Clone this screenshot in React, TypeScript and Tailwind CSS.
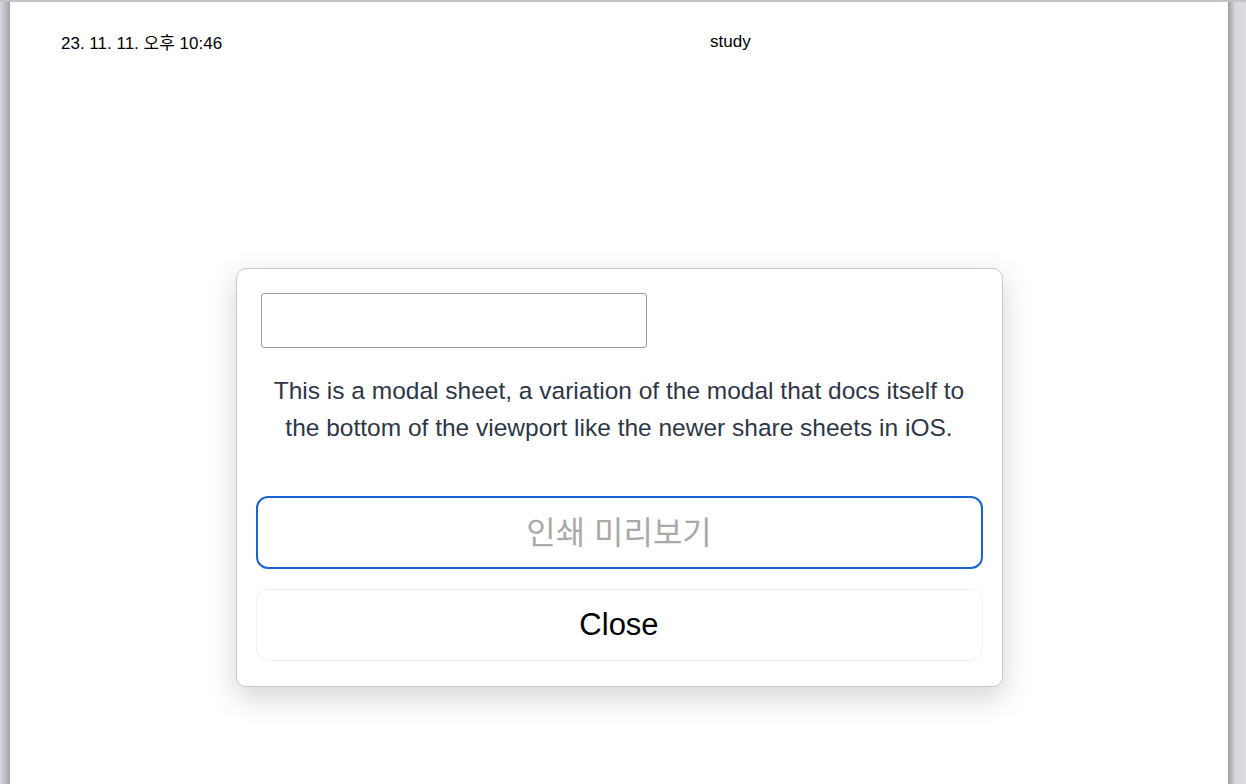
export default function App() {
  return (
    <div className="flex h-[784px] w-[1246px] flex-col overflow-hidden bg-[#dcdde1] font-['Liberation_Sans','Noto_Sans_CJK_KR',sans-serif]">
      {/* top edge of the print preview */}
      <div className="h-[2px] w-full bg-[#c2c3c7]" />
      <div className="flex flex-1">
        <div className="w-[10px] bg-gradient-to-r from-[#d9dade] to-[#a4a5ab]" />

        {/* printed page */}
        <div className="flex w-[1218px] flex-col bg-white">
          <div className="flex items-start pt-[30px] pl-[51px] text-[17px] leading-[20px] text-black">
            <span className="mt-[2px]">23. 11. 11. 오후 10:46</span>
            <span className="ml-[488px]">study</span>
          </div>

          <div className="mx-auto mt-[214px] flex w-[767px] flex-col rounded-[10px] border border-[#c9c9c9] bg-white px-[19px] pt-[24px] pb-[25px] shadow-[0_10px_30px_rgba(0,0,0,0.18)]">
            <input
              type="text"
              className="ml-[5px] h-[55px] w-[386px] rounded-[3px] border border-[#9c9c9c] bg-white px-2 text-[16px] outline-none"
            />

            <p className="mt-[24px] text-center text-[24.5px] leading-[37px] text-[#2d3748]">
              This is a modal sheet, a variation of the modal that docs itself to
              <br />
              the bottom of the viewport like the newer share sheets in iOS.
            </p>

            <button className="mt-[50px] flex h-[73px] w-full items-center justify-center rounded-[12px] border-2 border-[#1a62d6] bg-white text-[32px] text-[#a9a9a9]">
              인쇄 미리보기
            </button>

            <button className="mt-[20px] flex h-[72px] w-full items-center justify-center rounded-[12px] border border-[#f0f0f0] bg-white text-[31px] text-black">
              Close
            </button>
          </div>
        </div>

        <div className="w-[18px] bg-gradient-to-r from-[#9c9da2] via-[#d7d8dc] via-40% to-[#dcdde1]" />
      </div>
    </div>
  );
}
